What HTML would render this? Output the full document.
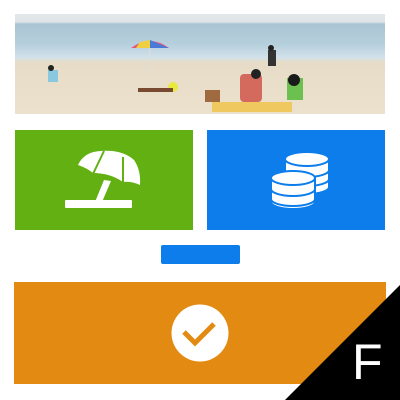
<!DOCTYPE html>
<html><head><style>
body{margin:0;width:400px;height:400px;background:#fff;position:relative;overflow:hidden;font-family:"Liberation Sans",sans-serif}
div{position:absolute}
</style></head><body>
<div style="left:15px;top:14px;width:370px;height:100px;overflow:hidden;background:linear-gradient(#e4e8ea 0,#dde4e8 8px,#a9c4d4 10px,#b6cfdc 30px,#d2e2ea 44px,#e0dfd6 46px,#e6dcc8 48px,#ebe1cc 100%)">
<svg width="370" height="100" viewBox="15 14 370 100" style="position:absolute;left:0;top:0">
<path d="M131 48 Q150 34 169 48 Z" fill="#e05a7a"/><path d="M150 40 L169 48 L150 48Z" fill="#4a7ad8"/><path d="M140 42 L150 40 150 48 136 48Z" fill="#f0d040"/>
<line x1="150" y1="48" x2="148" y2="75" stroke="#ddd" stroke-width="1"/>
<circle cx="173" cy="87" r="5" fill="#e8e840"/>
<rect x="240" y="74" width="22" height="28" rx="4" fill="#d46a5e"/><circle cx="256" cy="74" r="5" fill="#222"/>
<rect x="287" y="78" width="16" height="22" fill="#6cc050"/><circle cx="294" cy="80" r="6" fill="#1a1a1a"/>
<rect x="268" y="50" width="8" height="16" fill="#333"/><circle cx="271" cy="48" r="3" fill="#222"/>
<rect x="212" y="102" width="80" height="10" fill="#f0c860"/>
<rect x="205" y="90" width="15" height="12" fill="#a06a40"/>
<rect x="48" y="70" width="10" height="12" fill="#8ac8e0"/><circle cx="51" cy="68" r="3" fill="#222"/>
<rect x="138" y="88" width="35" height="4" fill="#7a4a30"/>
</svg></div>
<div style="left:15px;top:130px;width:178px;height:100px;background:#63b013">
<svg width="178" height="100" viewBox="15 130 178 100">
<path d="M78 165 Q84 152 100 151 Q122 149 134 160 Q141 170 140 185 Q131 181 123 182 Q110 173 93 173 Q87 168 78 165 Z" fill="#fff"/>
<path d="M93 174 L104 151 M123 183 L123 157" stroke="#63b013" stroke-width="2" fill="none"/>
<path d="M104 180 L111 181 L102 202 L95 202 Z" fill="#fff"/>
<rect x="65" y="200" width="67" height="8" rx="1" fill="#fff"/>
</svg></div>
<div style="left:207px;top:130px;width:178px;height:100px;background:#0c7deb">
<svg width="178" height="100" viewBox="207 130 178 100">
<g fill="#fff" stroke="#0c7deb" stroke-width="2">
<path d="M285 159 v28 a22 7 0 0 0 44 0 v-28z"/>
<ellipse cx="307" cy="159" rx="22" ry="7"/>
<path d="M285 170 a22 7 0 0 0 44 0 M285 179 a22 7 0 0 0 44 0" fill="none"/>
<path d="M271 178 v24 a22 7 0 0 0 44 0 v-24z"/>
<ellipse cx="293" cy="178" rx="22" ry="7"/>
<path d="M271 189 a22 7 0 0 0 44 0 M271 199 a22 7 0 0 0 44 0" fill="none"/>
</g></svg></div>
<div style="left:161px;top:245px;width:79px;height:19px;background:#0c7deb;border-radius:2px"></div>
<div style="left:14px;top:282px;width:372px;height:102px;background:#e28a11"></div>
<svg width="400" height="400" style="position:absolute;left:0;top:0">
<circle cx="200" cy="333" r="28.5" fill="#fff"/>
<path d="M184 332 L195 343 L214 324" stroke="#e28a11" stroke-width="5" fill="none"/>
<polygon points="400,285 400,400 285,400" fill="#000"/>
</svg>
<div style="left:352px;top:332px;font-size:50px;color:#fff;line-height:60px">F</div>
</body></html>
